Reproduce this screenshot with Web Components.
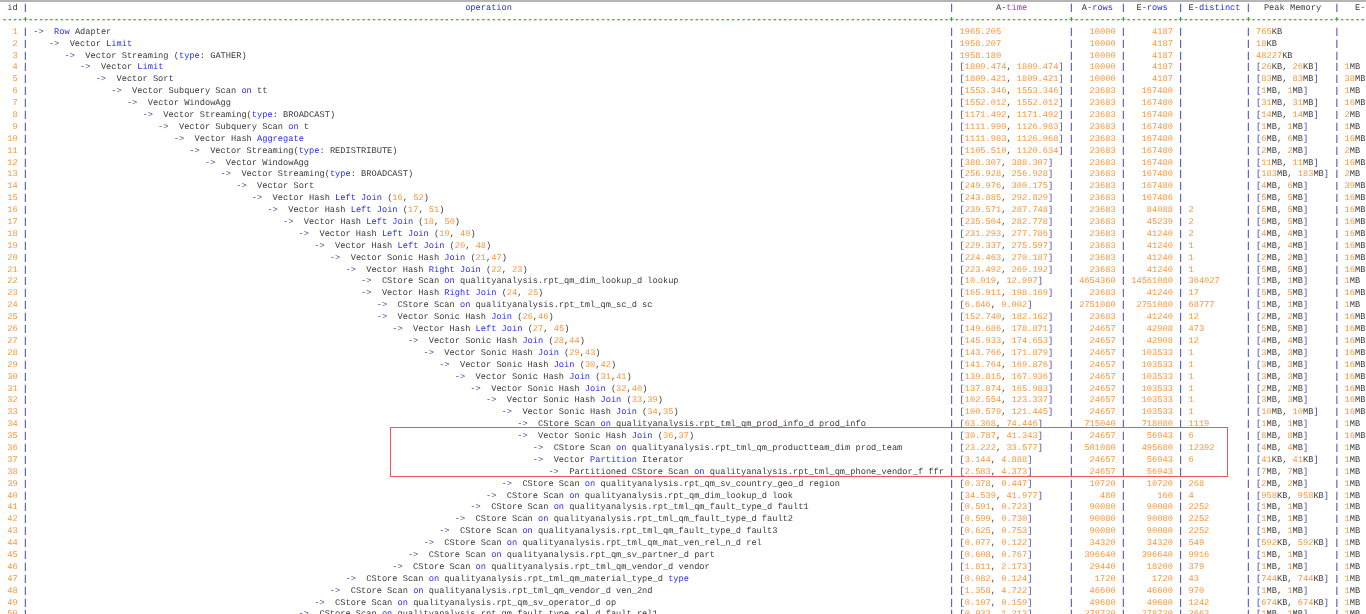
<!DOCTYPE html>
<html><head><meta charset="utf-8"><title>Plan</title>
<style>
html,body{margin:0;padding:0;background:#fff;height:100%;overflow:hidden}
</style></head><body>
<plan-view></plan-view>
<script>
const COLS='4ch 1ch 177ch 1ch 22ch 1ch 9ch 1ch 10ch 1ch 12ch 1ch 16ch 1ch 9ch';
const esc=s=>s.replace(/&/g,'&amp;').replace(/</g,'&lt;').replace(/>/g,'&gt;');
const KW=/\b(Row|Limit|type|on|Aggregate|Left|Right|Join|Partition)\b/;
function hlOp(s){
  return s.split(/(\b(?:Row|Limit|type|on|Aggregate|Left|Right|Join|Partition)\b|\b\d+\b|->)/).map(t=>{
    if(!t)return '';
    if(t==='->')return `<span class="ar">-&gt;</span>`;
    if(KW.test(t)&&/^[A-Za-z]+$/.test(t))return `<span class="k">${t}</span>`;
    if(/^\d+$/.test(t))return `<span class="n">${t}</span>`;
    return esc(t);
  }).join('');
}
function hlVal(s){
  return s.split(/(\d+(?:\.\d+)?|[\[\]])/).map(t=>{
    if(!t)return '';
    if(/^\d/.test(t))return `<span class="n">${t}</span>`;
    if(t==='['||t===']')return `<span class="b">${t}</span>`;
    return esc(t);
  }).join('');
}
class PlanRow extends HTMLElement{
  constructor(){super();
    const a=k=>this.getAttribute(k)||'';
    const lvl=+a('lvl');
    this.attachShadow({mode:'open'}).innerHTML=`<style>
:host{display:grid;grid-template-columns:${COLS};height:var(--row);line-height:var(--row);white-space:pre}
span{white-space:pre}
.id{text-align:right;padding-right:1ch;color:var(--num)}
.p{color:var(--pipe);font-weight:bold;text-align:center}
.op{padding-left:calc(${lvl*3}ch + 1ch)}
.r{text-align:right;padding-right:1ch;color:var(--num)}
.t{padding-left:1ch}
.n{color:var(--num)}.k{color:var(--kw)}.b{color:var(--br)}.ar{color:#35359a}
</style>
<span class="id">${a('n')}</span><span class="p">|</span><span class="op">${hlOp('->  '+a('op'))}</span><span class="p">|</span><span class="t">${hlVal(a('at'))}</span><span class="p">|</span><span class="r">${a('ar')}</span><span class="p">|</span><span class="r">${a('er')}</span><span class="p">|</span><span class="t n">${a('ed')}</span><span class="p">|</span><span class="t">${hlVal(a('pm'))}</span><span class="p">|</span><span class="t">${hlVal(a('em'))}</span>`;
  }
}
customElements.define('plan-row',PlanRow);
class PlanHead extends HTMLElement{
  constructor(){super();
    this.attachShadow({mode:'open'}).innerHTML=`<style>
:host{display:block;height:calc(var(--row)*2)}
.h{display:grid;grid-template-columns:${COLS};height:var(--row);line-height:var(--row);white-space:pre}
.p{color:var(--pipe);font-weight:bold;text-align:center}
.c{text-align:center}.k{color:var(--kw)}.m{color:#a33aa3}
.l{padding-left:3ch}
.d{height:var(--row);line-height:var(--row);color:#0f9a2a;font-weight:bold;white-space:pre;overflow:hidden}
</style>
<div class="h"><span class="c">id</span><span class="p">|</span><span class="c k">operation</span><span class="p">|</span><span class="c">A-<span class="m">time</span></span><span class="p">|</span><span class="c">A-<span class="k">rows</span></span><span class="p">|</span><span class="c">E-<span class="k">rows</span></span><span class="p">|</span><span class="c">E-<span class="k">distinct</span></span><span class="p">|</span><span class="c">Peak Memory</span><span class="p">|</span><span class="l">E-</span></div>
<div class="d" id="d"></div>`;
    const w=[4,177,22,9,10,12,16,5];
    this.shadowRoot.getElementById('d').textContent=w.map(x=>'-'.repeat(x)).join('+');
  }
}
customElements.define('plan-head',PlanHead);
const R=[
[0,'Row Adapter','1965.205',10000,4187,'','765KB',''],
[1,'Vector Limit','1958.207',10000,4187,'','18KB',''],
[2,'Vector Streaming (type: GATHER)','1958.180',10000,4187,'','48227KB',''],
[3,'Vector Limit','[1809.474, 1809.474]',10000,4187,'','[26KB, 26KB]','1MB'],
[4,'Vector Sort','[1809.421, 1809.421]',10000,4187,'','[83MB, 83MB]','38MB'],
[5,'Vector Subquery Scan on tt','[1553.346, 1553.346]',23683,167480,'','[1MB, 1MB]','1MB'],
[6,'Vector WindowAgg','[1552.012, 1552.012]',23683,167480,'','[31MB, 31MB]','16MB'],
[7,'Vector Streaming(type: BROADCAST)','[1171.492, 1171.492]',23683,167480,'','[14MB, 14MB]','2MB'],
[8,'Vector Subquery Scan on t','[1111.999, 1126.983]',23683,167480,'','[1MB, 1MB]','1MB'],
[9,'Vector Hash Aggregate','[1111.983, 1126.968]',23683,167480,'','[6MB, 6MB]','16MB'],
[10,'Vector Streaming(type: REDISTRIBUTE)','[1105.510, 1120.634]',23683,167480,'','[2MB, 2MB]','2MB'],
[11,'Vector WindowAgg','[388.307, 388.307]',23683,167480,'','[11MB, 11MB]','16MB'],
[12,'Vector Streaming(type: BROADCAST)','[256.928, 256.928]',23683,167480,'','[183MB, 183MB]','2MB'],
[13,'Vector Sort','[249.976, 300.175]',23683,167480,'','[4MB, 6MB]','39MB'],
[14,'Vector Hash Left Join (16, 52)','[243.885, 292.829]',23683,167486,'','[5MB, 5MB]','16MB'],
[15,'Vector Hash Left Join (17, 51)','[239.571, 287.748]',23683,84088,'2','[5MB, 5MB]','16MB'],
[16,'Vector Hash Left Join (18, 50)','[235.504, 282.778]',23683,45239,'2','[5MB, 5MB]','16MB'],
[17,'Vector Hash Left Join (19, 49)','[231.293, 277.786]',23683,41240,'2','[4MB, 4MB]','16MB'],
[18,'Vector Hash Left Join (20, 48)','[229.337, 275.597]',23683,41240,'1','[4MB, 4MB]','16MB'],
[19,'Vector Sonic Hash Join (21,47)','[224.463, 270.187]',23683,41240,'1','[2MB, 2MB]','16MB'],
[20,'Vector Hash Right Join (22, 23)','[223.492, 269.192]',23683,41240,'1','[5MB, 5MB]','16MB'],
[21,'CStore Scan on qualityanalysis.rpt_qm_dim_lookup_d lookup','[10.019, 12.997]',4654360,14561080,'364027','[1MB, 1MB]','1MB'],
[21,'Vector Hash Right Join (24, 25)','[165.911, 198.169]',23683,41240,'17','[5MB, 5MB]','16MB'],
[22,'CStore Scan on qualityanalysis.rpt_tml_qm_sc_d sc','[6.846, 9.002]',2751080,2751080,'68777','[1MB, 1MB]','1MB'],
[22,'Vector Sonic Hash Join (26,46)','[152.740, 182.162]',23683,41240,'12','[2MB, 2MB]','16MB'],
[23,'Vector Hash Left Join (27, 45)','[149.686, 178.871]',24657,42908,'473','[5MB, 5MB]','16MB'],
[24,'Vector Sonic Hash Join (28,44)','[145.933, 174.653]',24657,42908,'12','[4MB, 4MB]','16MB'],
[25,'Vector Sonic Hash Join (29,43)','[143.766, 171.879]',24657,103533,'1','[3MB, 3MB]','16MB'],
[26,'Vector Sonic Hash Join (30,42)','[141.764, 169.876]',24657,103533,'1','[3MB, 3MB]','16MB'],
[27,'Vector Sonic Hash Join (31,41)','[139.815, 167.936]',24657,103533,'1','[3MB, 3MB]','16MB'],
[28,'Vector Sonic Hash Join (32,40)','[137.874, 165.983]',24657,103533,'1','[2MB, 2MB]','16MB'],
[29,'Vector Sonic Hash Join (33,39)','[102.554, 123.337]',24657,103533,'1','[3MB, 3MB]','16MB'],
[30,'Vector Sonic Hash Join (34,35)','[100.579, 121.445]',24657,103533,'1','[10MB, 10MB]','16MB'],
[31,'CStore Scan on qualityanalysis.rpt_tml_qm_prod_info_d prod_info','[63.368, 74.446]',715040,718080,'1119','[1MB, 1MB]','1MB'],
[31,'Vector Sonic Hash Join (36,37)','[30.787, 41.343]',24657,56943,'6','[8MB, 8MB]','16MB'],
[32,'CStore Scan on qualityanalysis.rpt_tml_qm_productteam_dim prod_team','[23.222, 33.577]',501080,495680,'12392','[4MB, 4MB]','1MB'],
[32,'Vector Partition Iterator','[3.144, 4.888]',24657,56943,'6','[41KB, 41KB]','1MB'],
[33,'Partitioned CStore Scan on qualityanalysis.rpt_tml_qm_phone_vendor_f ffr','[2.583, 4.373]',24657,56943,'','[7MB, 7MB]','1MB'],
[30,'CStore Scan on qualityanalysis.rpt_qm_sv_country_geo_d region','[0.378, 0.447]',10720,10720,'268','[2MB, 2MB]','1MB'],
[29,'CStore Scan on qualityanalysis.rpt_qm_dim_lookup_d look','[34.539, 41.977]',480,160,'4','[958KB, 958KB]','1MB'],
[28,'CStore Scan on qualityanalysis.rpt_tml_qm_fault_type_d fault1','[0.591, 0.723]',90080,90080,'2252','[1MB, 1MB]','1MB'],
[27,'CStore Scan on qualityanalysis.rpt_tml_qm_fault_type_d fault2','[0.599, 0.730]',90080,90080,'2252','[1MB, 1MB]','1MB'],
[26,'CStore Scan on qualityanalysis.rpt_tml_qm_fault_type_d fault3','[0.625, 0.753]',90080,90080,'2252','[1MB, 1MB]','1MB'],
[25,'CStore Scan on qualityanalysis.rpt_tml_qm_mat_ven_rel_n_d rel','[0.077, 0.122]',34320,34320,'549','[592KB, 592KB]','1MB'],
[24,'CStore Scan on qualityanalysis.rpt_qm_sv_partner_d part','[0.608, 0.767]',396640,396640,'9916','[1MB, 1MB]','1MB'],
[23,'CStore Scan on qualityanalysis.rpt_tml_qm_vendor_d vendor','[1.811, 2.173]',29440,18200,'379','[1MB, 1MB]','1MB'],
[20,'CStore Scan on qualityanalysis.rpt_tml_qm_material_type_d type','[0.082, 0.124]',1720,1720,'43','[744KB, 744KB]','1MB'],
[19,'CStore Scan on qualityanalysis.rpt_tml_qm_vendor_d ven_2nd','[1.358, 4.722]',46600,46600,'970','[1MB, 1MB]','1MB'],
[18,'CStore Scan on qualityanalysis.rpt_qm_sv_operator_d op','[0.107, 0.159]',49680,49680,'1242','[674KB, 674KB]','1MB'],
[17,'CStore Scan on qualityanalysis.rpt_qm_fault_type_rel_d fault_rel1','[0.933, 1.213]',278720,278720,'2662','[1MB, 1MB]','1MB']
];
class PlanView extends HTMLElement{
  constructor(){super();
    const rows=R.map((r,i)=>{
      const q=s=>String(s).replace(/"/g,'&quot;');
      return `<plan-row n="${i+1}" lvl="${r[0]}" op="${q(r[1])}" at="${q(r[2])}" ar="${r[3]}" er="${r[4]}" ed="${r[5]}" pm="${q(r[6])}" em="${q(r[7])}"></plan-row>`;
    }).join('');
    this.attachShadow({mode:'open'}).innerHTML=`<style>
:host{display:block;position:relative;width:1366px;height:614px;overflow:hidden;background:#fff;
 --row:11.895px;--num:#f9963a;--kw:#2a2af0;--pipe:#5a5ac4;--br:#3a3aa8;
 font:8.68px/11.895px "Liberation Mono",monospace;color:#3a3a3a;text-rendering:geometricPrecision}
.top{height:2px;background:#b5b5b5}
.body{padding:1px 0 0 2px;width:1400px;box-sizing:border-box;height:612px;overflow:hidden;filter:blur(.25px)}
.mark{position:absolute;left:390px;top:427px;width:838px;height:50px;box-sizing:border-box;border:1px solid #f4555a;pointer-events:none}
</style>
<div class="top"></div>
<div class="body"><plan-head></plan-head>${rows}</div>
<div class="mark"></div>`;
  }
}
customElements.define('plan-view',PlanView);
</script>
</body></html>
